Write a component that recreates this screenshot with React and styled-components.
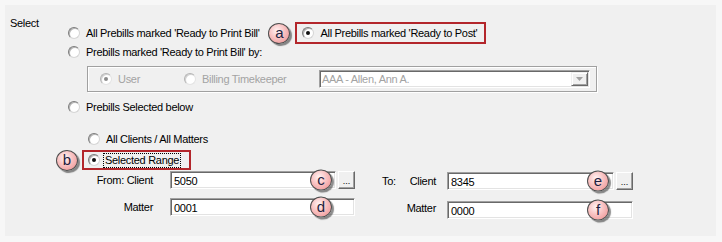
import React from 'react'
import styled, { createGlobalStyle } from 'styled-components'

const GlobalStyle = createGlobalStyle`
    body{
        margin: 0;
        background: #f7f7f7;
        font-family: "Liberation Sans", Arial, sans-serif;
        font-size: 11px;
        letter-spacing: -0.3px;
        color: #000;
    }
`;

function Radio({ checked, disabled, children, focus }) {
    return (
        <RadioItem $disabled={disabled}>
            <RadioDot $checked={checked} $disabled={disabled} />
            {focus ? <FocusText>{children}</FocusText> : <span>{children}</span>}
        </RadioItem>
    )
}

function Field({ value, width, browse, badge, drop = 0 }) {
    return (
        <FieldCell $drop={drop}>
            <InputWrap>
                <TextBox $width={width}>{value}</TextBox>
                {badge && <OverBadge>{badge}</OverBadge>}
            </InputWrap>
            {browse && <BrowseButton>...</BrowseButton>}
        </FieldCell>
    )
}

function App() {
    return (
        <>
            <GlobalStyle />
            <Panel>
                <SelectLabel>Select</SelectLabel>
                <Options>
                    <Row $h={22}>
                        <Radio>All Prebills marked 'Ready to Print Bill'</Radio>
                        <Badge $ml={9}>a</Badge>
                        <Callout $ml={5} $pl={5} $pr={7}>
                            <Radio checked>All Prebills marked 'Ready to Post'</Radio>
                        </Callout>
                    </Row>
                    <Row $h={16}>
                        <Radio>Prebills marked 'Ready to Print Bill' by:</Radio>
                    </Row>
                    <GroupBox>
                        <GroupItem $w={84}>
                            <Radio checked disabled>User</Radio>
                        </GroupItem>
                        <GroupItem $w={135}>
                            <Radio disabled>Billing Timekeeper</Radio>
                        </GroupItem>
                        <Combo>
                            <ComboText>AAA - Allen, Ann A.</ComboText>
                            <ComboArrow>
                                <svg width="7" height="4" viewBox="0 0 7 4">
                                    <path d="M0 0h7L3.5 4z" fill="#a0a0a0" />
                                </svg>
                            </ComboArrow>
                        </Combo>
                    </GroupBox>
                    <Row $h={16} $mt={7}>
                        <Radio>Prebills Selected below</Radio>
                    </Row>

                    <Row $h={16} $mt={16} $ml={20}>
                        <Radio>All Clients / All Matters</Radio>
                    </Row>
                    <Row $h={20} $mt={3}>
                        <Badge $ml={-12}>b</Badge>
                        <Callout $ml={4} $pl={4} $pr={8}>
                            <Radio checked focus>Selected Range</Radio>
                        </Callout>
                    </Row>

                    <FieldGrid>
                        <FieldLabel>From: Client</FieldLabel>
                        <Field value="5050" browse badge="c" />
                        <ToLabel $drop={1}>
                            <span>To:</span>
                            <span>Client</span>
                        </ToLabel>
                        <Field value="8345" browse badge="e" drop={1} />

                        <FieldLabel>Matter</FieldLabel>
                        <Field value="0001" badge="d" />
                        <FieldLabel $right $drop={3}>Matter</FieldLabel>
                        <Field value="0000" badge="f" drop={3} />
                    </FieldGrid>
                </Options>
            </Panel>
        </>
    )
}

const Panel = styled.div`
    margin: 5px 0 0 5px;
    width: 711px;
    height: 231px;
    box-sizing: border-box;
    background: #f0f0f0;
    display: grid;
    grid-template-columns: 58px 1fr;
    padding-left: 5px;
`;

const SelectLabel = styled.div`
    padding-top: 12px;
    line-height: 13px;
`;

const Options = styled.div`
    padding-top: 17px;
    display: flex;
    flex-direction: column;
    align-items: flex-start;
`;

const Row = styled.div`
    display: flex;
    align-items: center;
    height: ${p => p.$h}px;
    margin-top: ${p => p.$mt || 0}px;
    margin-left: ${p => p.$ml || 0}px;
`;

const RadioItem = styled.label`
    display: flex;
    align-items: center;
    gap: 6px;
    line-height: 13px;
    white-space: nowrap;
    color: ${p => p.$disabled ? '#a3a3a3' : '#000'};
`;

const RadioDot = styled.span`
    position: relative;
    flex: none;
    width: 12px;
    height: 12px;
    box-sizing: border-box;
    border-radius: 50%;
    border: 1px solid;
    border-color: ${p => p.$disabled
        ? '#b4b4b4 #e4e4e4 #e4e4e4 #b4b4b4'
        : '#7c7c7c #d6d6d6 #d6d6d6 #7c7c7c'};
    background: radial-gradient(circle at 55% 55%, #fff 0 50%, #e8e8e8 100%);
    box-shadow: inset 1px 1px 0 ${p => p.$disabled ? '#d2d2d2' : '#b4b4b4'};

    &::after{
        content: '';
        display: ${p => p.$checked ? 'block' : 'none'};
        position: absolute;
        left: 3px;
        top: 3px;
        width: 4px;
        height: 4px;
        border-radius: 50%;
        background: ${p => p.$disabled ? '#8c8c8c' : '#111'};
    }
`;

const FocusText = styled.span`
    border: 1px dotted #000;
    padding: 0 1px;
    margin-left: -3px;
`;

const Badge = styled.span`
    flex: none;
    width: 22px;
    height: 21px;
    box-sizing: border-box;
    margin-left: ${p => p.$ml || 0}px;
    border-radius: 50%;
    border: 1px solid #4d4d4d;
    background: radial-gradient(circle at 40% 35%, #fff4f4 0, #f9c6c6 40%, #ec8b8b 100%);
    box-shadow: 2px 2px 1px rgba(0, 0, 0, 0.45);
    display: flex;
    align-items: center;
    justify-content: center;
    font-size: 15px;
    letter-spacing: 0;
    line-height: 1;
    padding-bottom: 2px;
    color: #1e1e40;
`;

const OverBadge = styled(Badge)`
    position: absolute;
    left: 140px;
    top: 50%;
    transform: translateY(-50%);
`;

const Callout = styled.div`
    display: flex;
    align-items: center;
    align-self: stretch;
    margin-left: ${p => p.$ml}px;
    padding: 0 ${p => p.$pr}px 0 ${p => p.$pl}px;
    border: 2px solid #b3262b;
`;

const GroupBox = styled.div`
    margin: 6px 0 0 19px;
    width: 510px;
    height: 26px;
    box-sizing: border-box;
    border: 1px solid #a0a0a0;
    box-shadow: inset 1px 1px 0 #fff, 1px 1px 0 #fff;
    display: flex;
    align-items: center;
    padding-left: 12px;
`;

const GroupItem = styled.div`
    width: ${p => p.$w}px;
    flex: none;
`;

const Combo = styled.div`
    width: 271px;
    height: 18px;
    box-sizing: border-box;
    margin-bottom: 1px;
    background: #fff;
    border: 1px solid;
    border-color: #a0a0a0 #fff #fff #a0a0a0;
    box-shadow: inset 1px 1px 0 #696969, inset -1px -1px 0 #e3e3e3;
    display: flex;
    align-items: stretch;
`;

const ComboText = styled.span`
    flex: 1;
    color: #a3a3a3;
    padding: 2px 0 0 2px;
    line-height: 13px;
`;

const ComboArrow = styled.span`
    width: 17px;
    margin: 1px 1px 1px 0;
    box-sizing: border-box;
    background: #f0f0f0;
    border: 1px solid;
    border-color: #f0f0f0 #696969 #696969 #f0f0f0;
    box-shadow: inset 1px 1px 0 #fff, inset -1px -1px 0 #a0a0a0;
    display: flex;
    align-items: center;
    justify-content: center;
`;

const FieldGrid = styled.div`
    margin-top: 1px;
    display: grid;
    grid-template-columns: 102px 185px 92px 186px;
    grid-auto-rows: 18px;
    row-gap: 9px;
`;

const FieldLabel = styled.div`
    align-self: center;
    text-align: right;
    padding-right: ${p => p.$right ? 11 : 17}px;
    margin-top: ${p => p.$drop || 0}px;
    line-height: 13px;
`;

const ToLabel = styled.div`
    display: flex;
    align-items: center;
    justify-content: space-between;
    padding: 0 11px 0 27px;
    margin-top: ${p => p.$drop || 0}px;
`;

const FieldCell = styled.div`
    display: flex;
    gap: 2px;
    height: 18px;
    margin-top: ${p => p.$drop}px;
`;

const InputWrap = styled.div`
    position: relative;
    flex: 1;
    display: flex;
`;

const TextBox = styled.div`
    flex: 1;
    box-sizing: border-box;
    background: #fff;
    border: 1px solid;
    border-color: #a0a0a0 #fff #fff #a0a0a0;
    box-shadow: inset 1px 1px 0 #696969, inset -1px -1px 0 #e3e3e3;
    padding: 3px 0 0 3px;
    line-height: 13px;
`;

const BrowseButton = styled.div`
    width: 17px;
    height: 18px;
    box-sizing: border-box;
    background: #f0f0f0;
    border: 1px solid;
    border-color: #fff #696969 #696969 #fff;
    box-shadow: inset -1px -1px 0 #a0a0a0;
    font-size: 9px;
    letter-spacing: 0;
    line-height: 18px;
    text-align: center;
`;

export default App
